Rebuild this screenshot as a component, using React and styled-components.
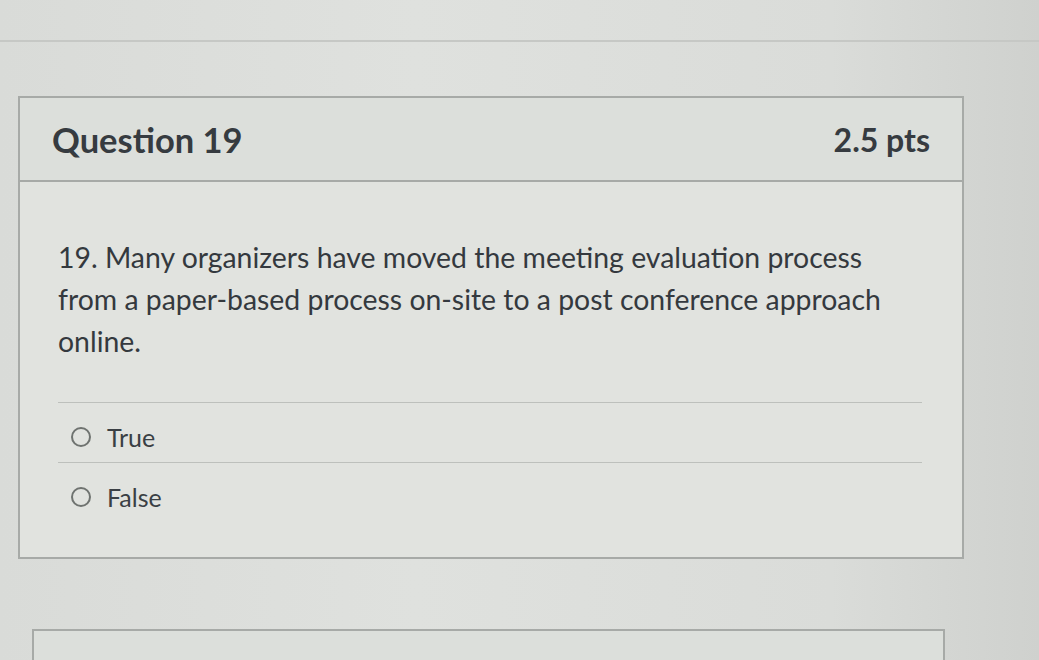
import React from 'react';
import styled, { createGlobalStyle } from 'styled-components';

const GlobalStyle = createGlobalStyle`
  html, body {
    margin: 0;
    padding: 0;
    height: 100%;
    overflow: hidden;
  }
  body {
    font-family: Lato, "Open Sans", sans-serif;
    background: linear-gradient(90deg, #d9dbd8 0%, #dfe1de 40%, #dadcd9 80%, #cfd1ce 100%);
    color: #34393e;
  }
`;

const Page = styled.div`
  min-height: 660px;
  padding-top: 40px;
`;

const TopRule = styled.div`
  height: 2px;
  background: #c6c8c5;
`;

const Card = styled.section`
  margin: ${(p) => p.$margin};
  width: ${(p) => p.$width}px;
  border: 2px solid #a7aaa7;
  background: #e1e3df;
  box-sizing: border-box;
`;

const Header = styled.header`
  display: flex;
  align-items: center;
  justify-content: space-between;
  height: 84px;
  box-sizing: border-box;
  padding: 0 32px 0 32px;
  background: #dcdfdb;
  border-bottom: 2px solid #a7aaa7;
`;

const Title = styled.h2`
  margin: 0;
  font-size: 34.5px;
  font-weight: 700;
  color: #363b40;
`;

const Points = styled.span`
  font-size: 32px;
  font-weight: 700;
  color: #363b40;
`;

const Body = styled.div`
  padding: 54px 40px 26px 38px;
`;

const QuestionText = styled.p`
  margin: 0;
  font-size: 28.4px;
  line-height: 42px;
  color: #34393e;
`;

const Answers = styled.div`
  margin-top: 40px;
  border-top: 1px solid #bdc0bc;
`;

const Answer = styled.label`
  display: flex;
  align-items: center;
  gap: 16px;
  height: ${(p) => (p.$last ? 68 : 60)}px;
  padding-left: 13px;
  padding-top: ${(p) => (p.$last ? 0 : 8)}px;
  box-sizing: border-box;
  border-bottom: ${(p) => (p.$last ? 'none' : '1px solid #bdc0bc')};
  font-size: 25px;
  color: #3a3f44;
`;

const Radio = styled.span`
  width: 16px;
  height: 16px;
  border: 2px solid #6f7370;
  border-radius: 50%;
  flex-shrink: 0;
`;

export default function App() {
  return (
    <Page>
      <GlobalStyle />
      <TopRule />
      <Card $margin="54px 0 0 18px" $width={946}>
        <Header>
          <Title>Question 19</Title>
          <Points>2.5 pts</Points>
        </Header>
        <Body>
          <QuestionText>
            19. Many organizers have moved the meeting evaluation process from a
            paper-based process on-site to a post conference approach online.
          </QuestionText>
          <Answers>
            <Answer>
              <Radio />
              True
            </Answer>
            <Answer $last>
              <Radio />
              False
            </Answer>
          </Answers>
        </Body>
      </Card>
      <Card $margin="70px 0 0 32px" $width={913}>
        <Header>
          <Title>Question 20</Title>
          <Points>2.5 pts</Points>
        </Header>
      </Card>
    </Page>
  );
}
